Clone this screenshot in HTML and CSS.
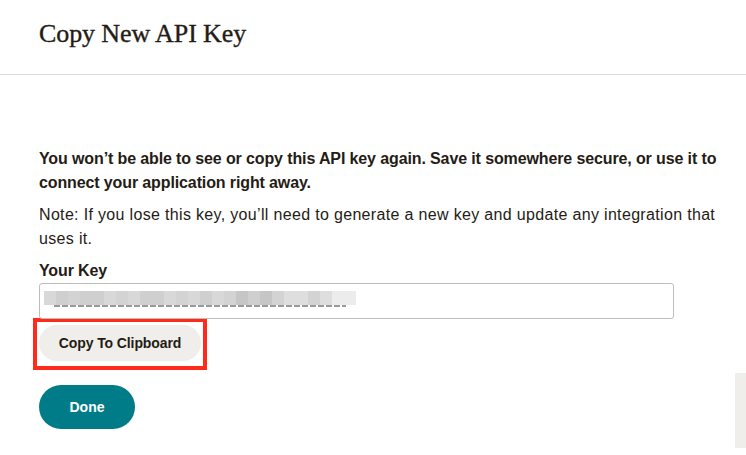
FILE: index.html
```html
<!DOCTYPE html>
<html lang="en">
<head>
<meta charset="utf-8">
<title>Copy New API Key</title>
<link rel="stylesheet" href="styles.css">
</head>
<body>
<header class="header">
  <h1 class="title">Copy New API Key</h1>
</header>
<main class="content">
  <p class="lead">You won’t be able to see or copy this API key again. Save it somewhere secure, or use it to connect your application right away.</p>
  <p class="note">Note: If you lose this key, you’ll need to generate a new key and update any integration that uses it.</p>
  <label class="label">Your Key</label>
  <div class="input">
    <div class="blur">
      <span class="b s2"></span><span class="b s1"></span><span class="b s3"></span><span class="b s1"></span><span class="b s1"></span><span class="b s2"></span><span class="b s3"></span><span class="b s2"></span><span class="b s1"></span><span class="b s1"></span><span class="b s2"></span><span class="b s3"></span><span class="b s2"></span><span class="b s1"></span><span class="b s2"></span><span class="b s3"></span><span class="b s0"></span><span class="b s1"></span><span class="b s0"></span><span class="b s3"></span><span class="b s4"></span><span class="b s4"></span><span class="b s3"></span><span class="b s4"></span><span class="b s5"></span><span class="b s5"></span>
    </div>
    <div class="ticks"></div>
  </div>
  <div class="highlight">
    <button class="btn-secondary">Copy To Clipboard</button>
  </div>
  <button class="btn-primary">Done</button>
</main>
<div class="side-tab"></div>
</body>
</html>
```
FILE: styles.css
```css
* { box-sizing: border-box; }
html, body { margin: 0; padding: 0; background: #fff; }
body {
  font-family: "Liberation Sans", Arial, sans-serif;
  color: #241c15;
  width: 746px;
  height: 455px;
  overflow: hidden;
  position: relative;
}
.header {
  height: 75px;
  border-bottom: 1px solid #dcdcdc;
  padding: 19px 39px 0;
}
.title {
  margin: 0;
  font-family: "Liberation Serif", "Times New Roman", serif;
  font-weight: 400;
  font-size: 26px;
  line-height: 30px;
  color: #241c15;
  -webkit-text-stroke: 0.35px #241c15;
  letter-spacing: -0.1px;
}
.content {
  padding: 72px 39px 0;
}
.lead {
  margin: 0;
  font-size: 16px;
  font-weight: 700;
  line-height: 24px;
  letter-spacing: -0.12px;
  width: 690px;
}
.note {
  margin: 8px 0 0;
  font-size: 16px;
  line-height: 24px;
  letter-spacing: 0.33px;
  width: 690px;
}
.label {
  display: block;
  margin-top: 8px;
  font-size: 16px;
  font-weight: 700;
  line-height: 24px;
  letter-spacing: -0.12px;
}
.input {
  margin-top: 0;
  width: 635px;
  height: 36px;
  border: 1px solid #bdbdbd;
  border-radius: 3px;
  padding: 7px 0 0 4px;
  position: relative;
}
.blur { display: flex; height: 14px; }
.b { display: block; width: 12px; height: 14px; }
.s0 { background: #c6c6c6; }
.s1 { background: #cfcfcf; }
.s2 { background: #d8d8d8; }
.s3 { background: #d3d3d3; }
.s4 { background: #dedede; }
.s5 { background: #ececec; }
.ticks {
  margin: 0 0 0 10px;
  width: 292px;
  height: 2px;
  background: repeating-linear-gradient(90deg, #555 0 6px, transparent 6px 8px);
  opacity: 0.6;
}
.highlight {
  width: 174px;
  margin-left: -6px;
  border: 4px solid #ff2a1a;
  padding: 3px 2px 5px;
  margin-top: -1px;
}
.btn-secondary {
  display: block;
  width: 162px;
  height: 36px;
  border: 0;
  border-radius: 18px;
  background: #efeeea;
  color: #241c15;
  font-family: "Liberation Sans", Arial, sans-serif;
  font-size: 14px;
  font-weight: 700;
  letter-spacing: -0.1px;
}
.btn-primary {
  display: block;
  margin-top: 15px;
  width: 96px;
  height: 44px;
  border: 0;
  border-radius: 22px;
  background: #007c89;
  color: #fff;
  font-family: "Liberation Sans", Arial, sans-serif;
  font-size: 14px;
  font-weight: 700;
}
.side-tab {
  position: absolute;
  right: 0;
  top: 373px;
  width: 11px;
  height: 75px;
  background: #efeeea;
}
```
